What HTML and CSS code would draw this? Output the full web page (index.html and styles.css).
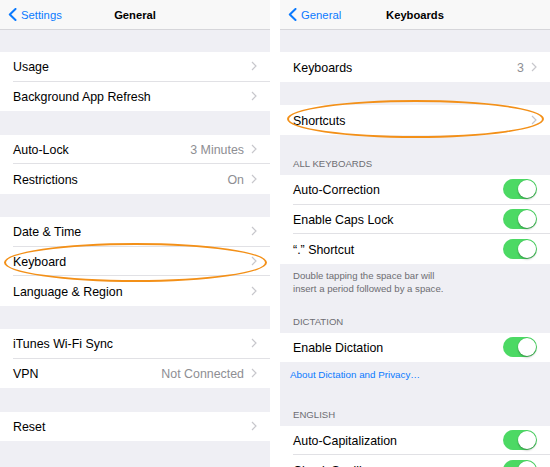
FILE: index.html
```html
<!DOCTYPE html>
<html>
<head>
<meta charset="utf-8">
<link rel="stylesheet" href="styles.css">
</head>
<body>
<div class="screen">
  <section class="panel">
    <header class="nav">
      <div class="back">
        <svg class="back-chev" width="9" height="13" viewBox="0 0 9 13"><path d="M7.5 1 L1.8 6.5 L7.5 12" fill="none" stroke="#0a7aff" stroke-width="2" stroke-linecap="round" stroke-linejoin="round"/></svg>
        <span>Settings</span>
      </div>
      <div class="title">General</div>
      <div></div>
    </header>
    <div class="gap gap-first"></div>
    <div class="group">
      <div class="row"><div class="cell"><span class="label">Usage</span><svg class="chev" width="6" height="10" viewBox="0 0 6 10"><path d="M1 1 L5 5 L1 9" fill="none" stroke="#c7c7cc" stroke-width="1.2"/></svg></div></div>
      <div class="row"><div class="cell"><span class="label">Background App Refresh</span><svg class="chev" width="6" height="10" viewBox="0 0 6 10"><path d="M1 1 L5 5 L1 9" fill="none" stroke="#c7c7cc" stroke-width="1.2"/></svg></div></div>
    </div>
    <div class="gap"></div>
    <div class="group">
      <div class="row"><div class="cell"><span class="label">Auto-Lock</span><span class="value">3 Minutes</span><svg class="chev" width="6" height="10" viewBox="0 0 6 10"><path d="M1 1 L5 5 L1 9" fill="none" stroke="#c7c7cc" stroke-width="1.2"/></svg></div></div>
      <div class="row"><div class="cell"><span class="label">Restrictions</span><span class="value">On</span><svg class="chev" width="6" height="10" viewBox="0 0 6 10"><path d="M1 1 L5 5 L1 9" fill="none" stroke="#c7c7cc" stroke-width="1.2"/></svg></div></div>
    </div>
    <div class="gap"></div>
    <div class="group">
      <div class="row"><div class="cell"><span class="label">Date &amp; Time</span><svg class="chev" width="6" height="10" viewBox="0 0 6 10"><path d="M1 1 L5 5 L1 9" fill="none" stroke="#c7c7cc" stroke-width="1.2"/></svg></div></div>
      <div class="row"><div class="cell"><span class="label">Keyboard</span><svg class="chev" width="6" height="10" viewBox="0 0 6 10"><path d="M1 1 L5 5 L1 9" fill="none" stroke="#c7c7cc" stroke-width="1.2"/></svg></div></div>
      <div class="row"><div class="cell"><span class="label">Language &amp; Region</span><svg class="chev" width="6" height="10" viewBox="0 0 6 10"><path d="M1 1 L5 5 L1 9" fill="none" stroke="#c7c7cc" stroke-width="1.2"/></svg></div></div>
    </div>
    <div class="gap"></div>
    <div class="group">
      <div class="row"><div class="cell"><span class="label">iTunes Wi-Fi Sync</span><svg class="chev" width="6" height="10" viewBox="0 0 6 10"><path d="M1 1 L5 5 L1 9" fill="none" stroke="#c7c7cc" stroke-width="1.2"/></svg></div></div>
      <div class="row"><div class="cell"><span class="label">VPN</span><span class="value">Not Connected</span><svg class="chev" width="6" height="10" viewBox="0 0 6 10"><path d="M1 1 L5 5 L1 9" fill="none" stroke="#c7c7cc" stroke-width="1.2"/></svg></div></div>
    </div>
    <div class="gap"></div>
    <div class="group">
      <div class="row"><div class="cell"><span class="label">Reset</span><svg class="chev" width="6" height="10" viewBox="0 0 6 10"><path d="M1 1 L5 5 L1 9" fill="none" stroke="#c7c7cc" stroke-width="1.2"/></svg></div></div>
    </div>
  </section>

  <section class="panel">
    <header class="nav">
      <div class="back">
        <svg class="back-chev" width="9" height="13" viewBox="0 0 9 13"><path d="M7.5 1 L1.8 6.5 L7.5 12" fill="none" stroke="#0a7aff" stroke-width="2" stroke-linecap="round" stroke-linejoin="round"/></svg>
        <span>General</span>
      </div>
      <div class="title">Keyboards</div>
      <div></div>
    </header>
    <div class="gap gap-first"></div>
    <div class="group">
      <div class="row"><div class="cell"><span class="label">Keyboards</span><span class="value">3</span><svg class="chev" width="6" height="10" viewBox="0 0 6 10"><path d="M1 1 L5 5 L1 9" fill="none" stroke="#c7c7cc" stroke-width="1.2"/></svg></div></div>
    </div>
    <div class="gap"></div>
    <div class="group">
      <div class="row"><div class="cell"><span class="label">Shortcuts</span><svg class="chev" width="6" height="10" viewBox="0 0 6 10"><path d="M1 1 L5 5 L1 9" fill="none" stroke="#c7c7cc" stroke-width="1.2"/></svg></div></div>
    </div>
    <div class="section-header sh-1">ALL KEYBOARDS</div>
    <div class="group">
      <div class="row"><div class="cell"><span class="label">Auto-Correction</span><span class="toggle"><span class="knob"></span></span></div></div>
      <div class="row"><div class="cell"><span class="label">Enable Caps Lock</span><span class="toggle"><span class="knob"></span></span></div></div>
      <div class="row"><div class="cell"><span class="label">“.” Shortcut</span><span class="toggle"><span class="knob"></span></span></div></div>
    </div>
    <div class="section-footer">Double tapping the space bar will<br>insert a period followed by a space.</div>
    <div class="section-header sh-2">DICTATION</div>
    <div class="group">
      <div class="row"><div class="cell"><span class="label">Enable Dictation</span><span class="toggle"><span class="knob"></span></span></div></div>
    </div>
    <div class="section-link">About Dictation and Privacy…</div>
    <div class="section-header sh-3">ENGLISH</div>
    <div class="group">
      <div class="row"><div class="cell"><span class="label">Auto-Capitalization</span><span class="toggle"><span class="knob"></span></span></div></div>
      <div class="row"><div class="cell"><span class="label">Check Spelling</span><span class="toggle"><span class="knob"></span></span></div></div>
    </div>
  </section>

  <div class="callout callout-left"></div>
  <div class="callout callout-right"></div>
</div>
</body>
</html>
```

FILE: styles.css
```css
html, body {
  margin: 0;
  padding: 0;
  background: #ffffff;
}
body {
  width: 550px;
  height: 467px;
  overflow: hidden;
  font-family: "Liberation Sans", Arial, sans-serif;
  -webkit-font-smoothing: antialiased;
}
.screen {
  position: relative;
  display: flex;
  gap: 10px;
  width: 550px;
  height: 467px;
  overflow: hidden;
}
.panel {
  width: 270px;
  flex: none;
  height: 467px;
  background: #efeff4;
  display: flex;
  flex-direction: column;
  overflow: hidden;
}
.nav {
  flex: none;
  height: 29px;
  border-bottom: 1px solid #d6d6da;
  background: #f8f8f8;
  display: grid;
  grid-template-columns: 1fr auto 1fr;
  align-items: center;
}
.back {
  display: flex;
  align-items: center;
  gap: 4px;
  padding-left: 8px;
  color: #0a7aff;
  font-size: 11.3px;
}
.back-chev {
  display: block;
}
.title {
  font-size: 11.2px;
  font-weight: bold;
  color: #000;
}
.gap {
  flex: none;
  height: 23.5px;
}
.gap-first {
  height: 22px;
}
.group {
  flex: none;
  background: #ffffff;
}
.row {
  padding-left: 13px;
}
.cell {
  box-sizing: border-box;
  height: 29.5px;
  display: flex;
  align-items: center;
  padding-right: 13px;
  padding-top: 1.5px;
  border-bottom: 1px solid #e1e1e5;
}
.row:last-child .cell {
  border-bottom: none;
}
.label {
  flex: 1;
  font-size: 12.4px;
  color: #000;
  white-space: nowrap;
}
.value {
  font-size: 12.4px;
  color: #8e8e93;
  margin-right: 7px;
  white-space: nowrap;
}
.chev {
  display: block;
  flex: none;
  margin-top: -1.5px;
}
.toggle {
  flex: none;
  width: 34px;
  height: 20px;
  margin-top: -1.5px;
  border-radius: 10px;
  background: #4cd964;
  display: flex;
  align-items: center;
  justify-content: flex-end;
  padding-right: 1px;
  box-sizing: border-box;
}
.knob {
  width: 18px;
  height: 18px;
  border-radius: 50%;
  background: #ffffff;
  box-shadow: 0 1.5px 2px rgba(0, 0, 0, 0.25), 0 0 0 0.5px rgba(0, 0, 0, 0.08);
}
.section-header {
  flex: none;
  font-size: 9.6px;
  line-height: 12px;
  color: #6d6d72;
  padding: 0 13px 5px;
}
.sh-1 { padding-top: 23.5px; }
.sh-2 { padding-top: 20.5px; }
.sh-3 { padding-top: 27.5px; }
.section-footer {
  flex: none;
  font-size: 9.6px;
  line-height: 13px;
  color: #6d6d72;
  padding: 5.5px 13px 0;
}
.section-link {
  flex: none;
  font-size: 9.8px;
  line-height: 13px;
  color: #0a7aff;
  padding: 6px 10px 0;
}
.callout {
  position: absolute;
  border: 2px solid #f39018;
  border-radius: 50%;
  box-sizing: border-box;
}
.callout-left {
  left: 4px;
  top: 243px;
  width: 263px;
  height: 39px;
}
.callout-right {
  left: 287px;
  top: 100px;
  width: 257px;
  height: 38px;
}
```
